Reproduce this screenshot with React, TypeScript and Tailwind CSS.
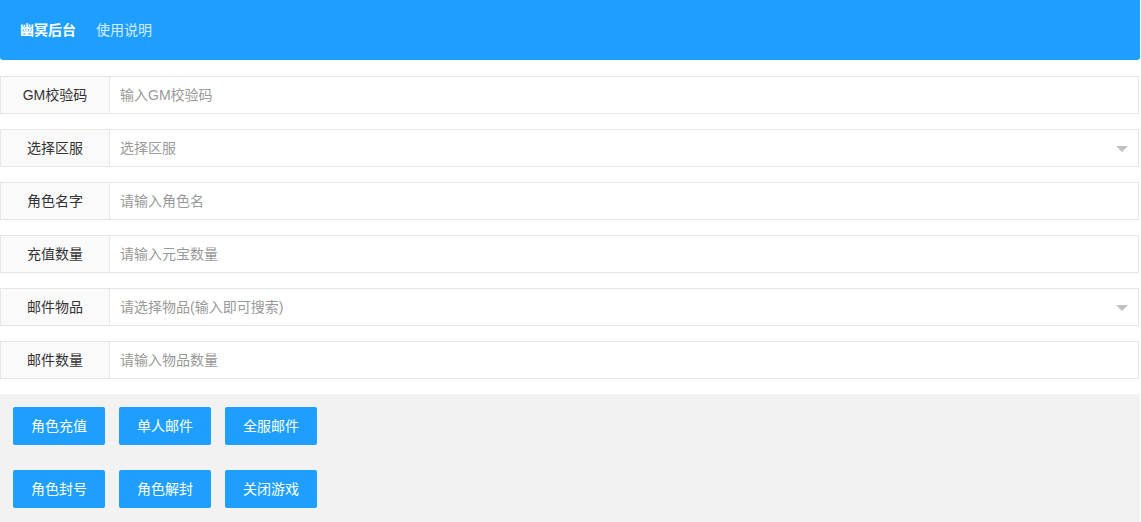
import React from "react";

const font = { fontFamily: '"Liberation Sans", "Noto Sans CJK SC", sans-serif' };

function Row({ label, placeholder, select }: { label: string; placeholder: string; select?: boolean }) {
  return (
    <div className="flex h-[38px] w-[1139px] mb-[15px]">
      <div className="w-[110px] shrink-0 flex items-center justify-center border border-[#e6e6e6] bg-[#fafafa] text-[14px] text-[#333]">
        {label}
      </div>
      <div className="relative flex-1 flex items-center border border-l-0 border-[#e6e6e6] bg-white pl-[10px] text-[14px] text-[#999]">
        {placeholder}
        {select && (
          <span className="absolute right-[10px] top-[16px] w-0 h-0 border-l-[6px] border-r-[6px] border-t-[6px] border-l-transparent border-r-transparent border-t-[#c2c2c2]" />
        )}
      </div>
    </div>
  );
}

function Btn({ children }: { children: React.ReactNode }) {
  return (
    <button className="w-[92px] h-[38px] rounded-[2px] bg-[#1e9fff] text-white text-[14px]">{children}</button>
  );
}

export default function App() {
  return (
    <div style={font} className="w-[1141px] h-[522px] bg-white overflow-hidden">
      <div className="w-[1140px] h-[60px] bg-[#1e9fff] rounded-b-[3px] flex items-center pl-[20px] text-[14px]">
        <span className="text-white font-bold">幽冥后台</span>
        <span className="ml-[20px] text-white/80">使用说明</span>
      </div>
      <div className="pt-[16px]">
        <Row label="GM校验码" placeholder="输入GM校验码" />
        <Row label="选择区服" placeholder="选择区服" select />
        <Row label="角色名字" placeholder="请输入角色名" />
        <Row label="充值数量" placeholder="请输入元宝数量" />
        <Row label="邮件物品" placeholder="请选择物品(输入即可搜索)" select />
        <Row label="邮件数量" placeholder="请输入物品数量" />
      </div>
      <div className="w-[1140px] h-[200px] bg-[#f2f2f2] pt-[13px] pl-[13px] flex flex-col gap-[25px]">
        <div className="flex gap-[14px]">
          <Btn>角色充值</Btn>
          <Btn>单人邮件</Btn>
          <Btn>全服邮件</Btn>
        </div>
        <div className="flex gap-[14px]">
          <Btn>角色封号</Btn>
          <Btn>角色解封</Btn>
          <Btn>关闭游戏</Btn>
        </div>
      </div>
    </div>
  );
}
